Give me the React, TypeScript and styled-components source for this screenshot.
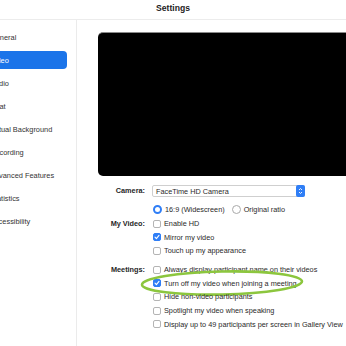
import React from 'react'
import styled, { createGlobalStyle } from 'styled-components'

const GlobalStyle = createGlobalStyle`
  html, body {
    margin: 0;
    padding: 0;
    background: #ffffff;
    overflow: hidden;
  }
  body {
    font-family: "Liberation Sans", Helvetica, Arial, sans-serif;
  }
`

const Window = styled.div`
  width: 346px;
  height: 346px;
  display: flex;
  flex-direction: column;
  background: #ffffff;
  overflow: hidden;
`

const TitleBar = styled.div`
  height: 20px;
  flex: none;
  display: flex;
  align-items: center;
  justify-content: center;
  border-bottom: 1px solid #ececec;
  font-size: 8.6px;
  font-weight: 700;
  color: #222;
  padding-bottom: 4px;
  box-sizing: border-box;
`

const Body = styled.div`
  flex: 1;
  display: flex;
  min-height: 0;
`

const Sidebar = styled.nav`
  width: 76px;
  flex: none;
  border-right: 1px solid #ebebeb;
  overflow: hidden;
`

const SideList = styled.ul`
  list-style: none;
  margin: 8px 0 0 -20px;
  padding: 0;
  display: flex;
  flex-direction: column;
  gap: 5px;
`

const SideItem = styled.li<{ $active?: boolean }>`
  height: 18px;
  display: flex;
  align-items: center;
  padding-left: 10px;
  margin-right: 9px;
  border-radius: 4px;
  font-size: 7.4px;
  white-space: nowrap;
  color: ${(p) => (p.$active ? '#ffffff' : '#333')};
  background: ${(p) => (p.$active ? '#1b74e9' : 'transparent')};
`

const Content = styled.main`
  flex: 1;
  padding: 12px 0 0 21px;
  overflow: hidden;
`

const Preview = styled.div`
  width: 256px;
  height: 144px;
  background: #000000;
  border-radius: 5px;
  border-top: 1px solid #8a8a8a;
  box-sizing: border-box;
`

const Form = styled.div`
  margin-top: 9px;
  display: grid;
  grid-template-columns: 47px 1fr;
  column-gap: 7px;
  align-items: start;
`

const Label = styled.div<{ $top?: number }>`
  font-size: 7.3px;
  font-weight: 700;
  color: #262626;
  text-align: right;
  white-space: nowrap;
  height: 13.7px;
  line-height: 13.7px;
  margin-top: ${(p) => p.$top || 0}px;
`

const Controls = styled.div<{ $top?: number }>`
  display: flex;
  flex-direction: column;
  margin-top: ${(p) => p.$top || 0}px;
`

const SelectBox = styled.div`
  width: 153px;
  height: 12px;
  box-sizing: border-box;
  border: 1px solid #cfcfcf;
  border-radius: 2px;
  background: #fff;
  display: flex;
  align-items: center;
  font-size: 7.3px;
  color: #2a2a2a;
  padding-left: 3px;
`

const SelectText = styled.span`
  flex: 1;
`

const Stepper = styled.span`
  width: 9px;
  height: 12px;
  margin-right: -1px;
  border-radius: 2px;
  background: #2f7ef6;
  display: flex;
  align-items: center;
  justify-content: center;
`

const CameraLabel = styled(Label)`
  height: 12px;
  line-height: 12px;
`

const Row = styled.div`
  height: 13.7px;
  display: flex;
  align-items: center;
  gap: 3px;
  font-size: 7.3px;
  color: #2a2a2a;
  white-space: nowrap;
  position: relative;
`

const RadioRow = styled(Row)`
  margin-top: 6px;
  margin-left: 1px;
`

const Radio = styled.span<{ $on?: boolean }>`
  width: 9px;
  height: 9px;
  box-sizing: border-box;
  border-radius: 50%;
  flex: none;
  border: ${(p) => (p.$on ? '2.5px solid #2f7ef6' : '1px solid #a9a9a9')};
  background: #fff;
`

const RadioText = styled.span`
  margin-right: 4px;
`

const Check = styled.span<{ $on?: boolean }>`
  width: 8px;
  height: 8px;
  box-sizing: border-box;
  border-radius: 2px;
  flex: none;
  border: 1px solid ${(p) => (p.$on ? '#2f7ef6' : '#b4b4b4')};
  background: ${(p) => (p.$on ? '#2f7ef6' : '#ffffff')};
  display: flex;
  align-items: center;
  justify-content: center;
  margin-left: 1px;
`

const Circle = styled.svg`
  position: absolute;
  left: -12px;
  top: -6px;
  overflow: visible;
  pointer-events: none;
`

const sideItems = [
  'General',
  'Video',
  'Audio',
  'Chat',
  'Virtual Background',
  'Recording',
  'Advanced Features',
  'Statistics',
  'Accessibility',
]

const CheckMark = () => (
  <svg width="6" height="6" viewBox="0 0 6 6">
    <path d="M1 3.2 L2.4 4.6 L5 1.4" fill="none" stroke="#fff" strokeWidth="1.1" strokeLinecap="round" strokeLinejoin="round" />
  </svg>
)

const Option: React.FC<{ on?: boolean; text: string; children?: React.ReactNode }> = ({ on, text, children }) => (
  <Row>
    <Check $on={on}>{on && <CheckMark />}</Check>
    <span>{text}</span>
    {children}
  </Row>
)

export default function App() {
  return (
    <Window>
      <GlobalStyle />
      <TitleBar>Settings</TitleBar>
      <Body>
        <Sidebar>
          <SideList>
            {sideItems.map((s) => (
              <SideItem key={s} $active={s === 'Video'}>
                {s}
              </SideItem>
            ))}
          </SideList>
        </Sidebar>
        <Content>
          <Preview />
          <Form>
            <CameraLabel>Camera:</CameraLabel>
            <Controls>
              <SelectBox>
                <SelectText>FaceTime HD Camera</SelectText>
                <Stepper>
                  <svg width="5" height="8" viewBox="0 0 5 8">
                    <path d="M1 3 L2.5 1.5 L4 3 M1 5 L2.5 6.5 L4 5" fill="none" stroke="#fff" strokeWidth="0.9" />
                  </svg>
                </Stepper>
              </SelectBox>
              <RadioRow>
                <Radio $on />
                <RadioText>16:9 (Widescreen)</RadioText>
                <Radio />
                <span>Original ratio</span>
              </RadioRow>
            </Controls>

            <Label>My Video:</Label>
            <Controls>
              <Option text="Enable HD" />
              <Option on text="Mirror my video" />
              <Option text="Touch up my appearance" />
            </Controls>

            <Label $top={5}>Meetings:</Label>
            <Controls $top={5}>
              <Option text="Always display participant name on their videos" />
              <Option on text="Turn off my video when joining a meeting">
                <Circle width="164" height="26" viewBox="0 0 164 26">
                  <ellipse
                    cx="82"
                    cy="13"
                    rx="80"
                    ry="11.5"
                    fill="none"
                    stroke="#8cc63e"
                    strokeWidth="2.6"
                    transform="rotate(-1.2 82 13)"
                  />
                </Circle>
              </Option>
              <Option text="Hide non-video participants" />
              <Option text="Spotlight my video when speaking" />
              <Option text="Display up to 49 participants per screen in Gallery View" />
            </Controls>
          </Form>
        </Content>
      </Body>
    </Window>
  )
}
